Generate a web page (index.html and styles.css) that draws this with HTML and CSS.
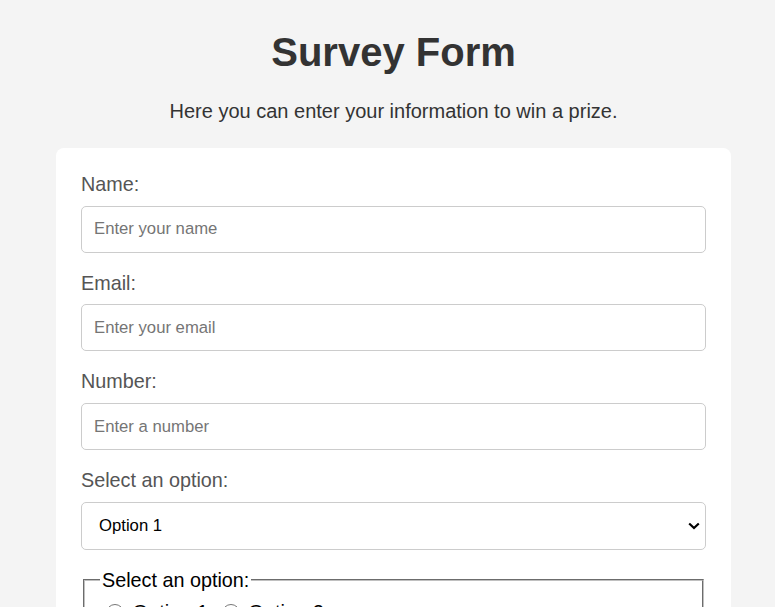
FILE: index.html
```html
<!DOCTYPE html>
<html lang="en">
<head>
<meta charset="utf-8">
<title>Survey Form</title>
<link rel="stylesheet" href="styles.css">
</head>
<body>
<h1 class="title">Survey Form</h1>
<p class="description">Here you can enter your information to win a prize.</p>
<form class="card">
  <label class="label" for="name">Name:</label>
  <input class="field" id="name" type="text" placeholder="Enter your name">
  <label class="label" for="email">Email:</label>
  <input class="field" id="email" type="email" placeholder="Enter your email">
  <label class="label" for="number">Number:</label>
  <input class="field" id="number" type="number" placeholder="Enter a number">
  <label class="label" for="dropdown">Select an option:</label>
  <select class="field select" id="dropdown">
    <option>Option 1</option>
    <option>Option 2</option>
  </select>
  <fieldset class="group">
    <legend class="legend">Select an option:</legend>
    <label class="radio"><input class="radio-input" type="radio" name="opt"> Option 1</label>
    <label class="radio"><input class="radio-input" type="radio" name="opt"> Option 2</label>
  </fieldset>
</form>
</body>
</html>
```
FILE: styles.css
```css
body {
  margin: 0;
  padding: 0 0 20px 12px;
  background: #f4f4f4;
  font-family: "Liberation Sans", Arial, sans-serif;
  color: #333;
}
.title {
  font-size: 40px;
  font-weight: bold;
  text-align: center;
  margin: 29px 0 0;
  line-height: 46px;
}
.description {
  font-size: 20px;
  text-align: center;
  margin: 25px 0 0;
  line-height: 23px;
}
.card {
  width: 625px;
  margin: 25px auto 0;
  padding: 25px 25px 25px;
  background: #fff;
  border-radius: 8px;
  display: flex;
  flex-direction: column;
}
.label {
  font-size: 19.8px;
  line-height: 22.67px;
  color: #555;
  margin-bottom: 10px;
}
.field {
  box-sizing: border-box;
  height: 47px;
  padding: 0 12px;
  border: 1px solid #ccc;
  border-radius: 5px;
  font-size: 16.7px;
  font-family: "Liberation Sans", Arial, sans-serif;
  margin-bottom: 19px;
  background-color: #fff;
}
.field::placeholder {
  color: #757575;
}
.select {
  -webkit-appearance: none;
  appearance: none;
  height: 48px;
  padding: 0 30px 0 17px;
  color: #000;
  background-image: url("data:image/svg+xml,%3Csvg xmlns='http://www.w3.org/2000/svg' width='12' height='8' viewBox='0 0 12 8'%3E%3Cpath d='M1.2 1.5 L6 6 L10.8 1.5' fill='none' stroke='%23000' stroke-width='2.2'/%3E%3C/svg%3E");
  background-repeat: no-repeat;
  background-position: right 5px center;
  background-size: 12px 8px;
}
.group {
  margin: 0 2px;
  padding: 9px 15px 12px;
  border: 2px groove #c0c0c0;
  font-size: 20px;
  color: #000;
}
.legend {
  font-size: 19.8px;
  line-height: 23px;
  color: #000;
  padding: 0 2px;
}
.radio {
  color: #000;
  margin-right: 2px;
}
.radio-input {
  width: 18px;
  height: 18px;
  margin: 3px 3px 0 6px;
  vertical-align: -3px;
}
```
